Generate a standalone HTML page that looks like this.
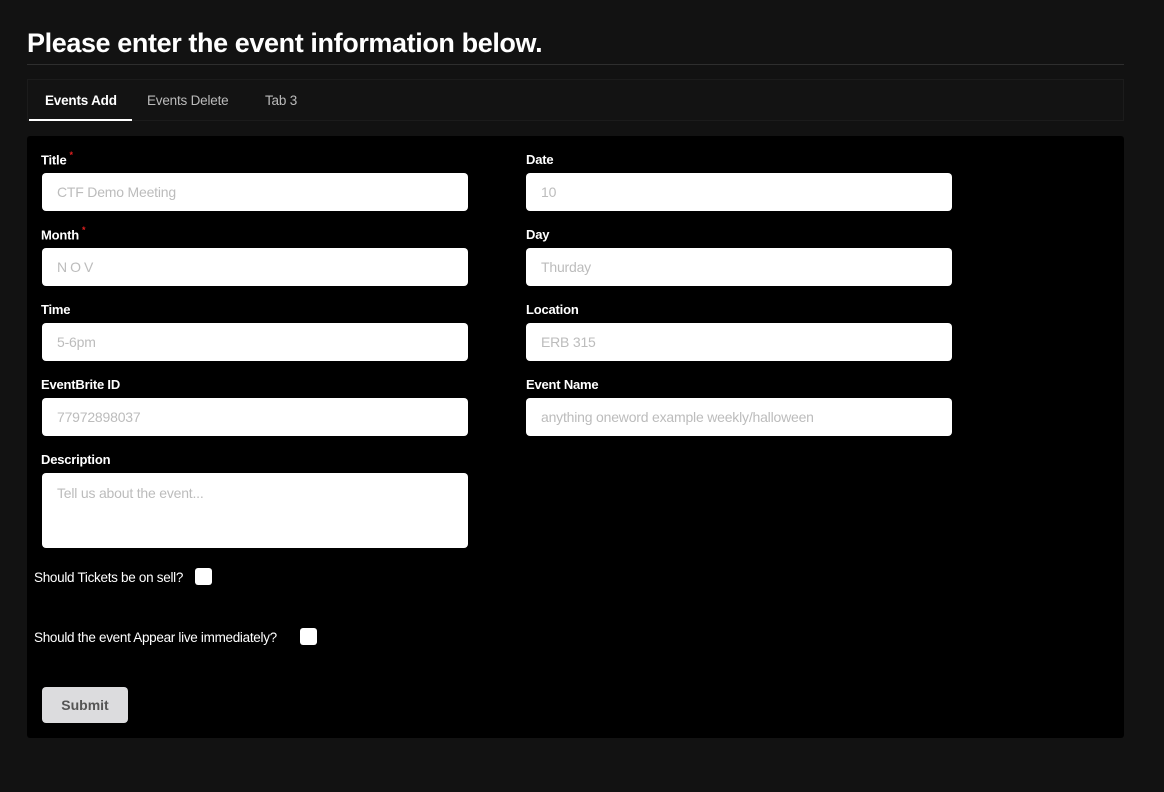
<!DOCTYPE html>
<html><head><meta charset="utf-8"><style>
*{box-sizing:border-box;margin:0;padding:0}
body{width:1164px;height:792px;background:#121212;font-family:"Liberation Sans",sans-serif;position:relative;overflow:hidden;color:#fff}
h1{position:absolute;left:27px;top:28px;font-size:27px;font-weight:bold;letter-spacing:-0.4px}
.hr{position:absolute;left:27px;top:64px;width:1097px;height:1px;background:#2e2e2e}
.tabs{position:absolute;left:27px;top:79px;width:1097px;height:42px;border:1px solid #1c1c1c;background:#131313}
.tab{position:absolute;top:13px;font-size:13.5px;color:#bbb;letter-spacing:-0.2px}
.ul{position:absolute;left:1px;top:39px;width:103px;height:2px;background:#fff}
.card{position:absolute;left:27px;top:136px;width:1097px;height:602px;background:#000;border-radius:3px}
.lbl{position:absolute;font-size:13px;font-weight:bold;color:#fff;letter-spacing:-0.2px}
.lbl sup{color:#e02020;font-size:9px;position:relative;top:-1px;margin-left:3px}
.in{position:absolute;width:426px;height:38px;background:#fff;border-radius:4px;font-size:14px;color:#bcbcbc;padding:11px 15px;letter-spacing:-0.2px}
.chk{position:absolute;width:17px;height:17px;background:#fff;border-radius:3px}
.q{position:absolute;font-size:13.5px;color:#fff;letter-spacing:-0.3px}
.btn{position:absolute;left:42px;top:687px;width:86px;height:36px;background:#dcdcde;border-radius:4px;color:#555;font-weight:bold;font-size:14px;text-align:center;line-height:36px}
</style></head><body>
<h1>Please enter the event information below.</h1>
<div class="hr"></div>
<div class="tabs">
<span class="tab" style="left:17px;color:#fff;font-weight:bold">Events Add</span>
<span class="tab" style="left:119px">Events Delete</span>
<span class="tab" style="left:237px">Tab 3</span>
<div class="ul"></div>
</div>
<div class="card"></div>
<div class="lbl" style="left:41px;top:151px">Title<sup>*</sup></div>
<div class="in" style="left:42px;top:173px">CTF Demo Meeting</div>
<div class="lbl" style="left:526px;top:152px">Date</div>
<div class="in" style="left:526px;top:173px">10</div>
<div class="lbl" style="left:41px;top:226px">Month<sup>*</sup></div>
<div class="in" style="left:42px;top:248px;letter-spacing:3px">NOV</div>
<div class="lbl" style="left:526px;top:227px">Day</div>
<div class="in" style="left:526px;top:248px">Thurday</div>
<div class="lbl" style="left:41px;top:302px">Time</div>
<div class="in" style="left:42px;top:323px">5-6pm</div>
<div class="lbl" style="left:526px;top:302px">Location</div>
<div class="in" style="left:526px;top:323px">ERB 315</div>
<div class="lbl" style="left:41px;top:377px">EventBrite ID</div>
<div class="in" style="left:42px;top:398px">77972898037</div>
<div class="lbl" style="left:526px;top:377px">Event Name</div>
<div class="in" style="left:526px;top:398px">anything oneword example weekly/halloween</div>
<div class="lbl" style="left:41px;top:452px">Description</div>
<div class="in" style="left:42px;top:473px;height:75px;padding-top:12px">Tell us about the event...</div>
<div class="q" style="left:34px;top:570px">Should Tickets be on sell?</div>
<div class="chk" style="left:195px;top:568px"></div>
<div class="q" style="left:34px;top:630px">Should the event Appear live immediately?</div>
<div class="chk" style="left:300px;top:628px"></div>
<div class="btn">Submit</div>
</body></html>
